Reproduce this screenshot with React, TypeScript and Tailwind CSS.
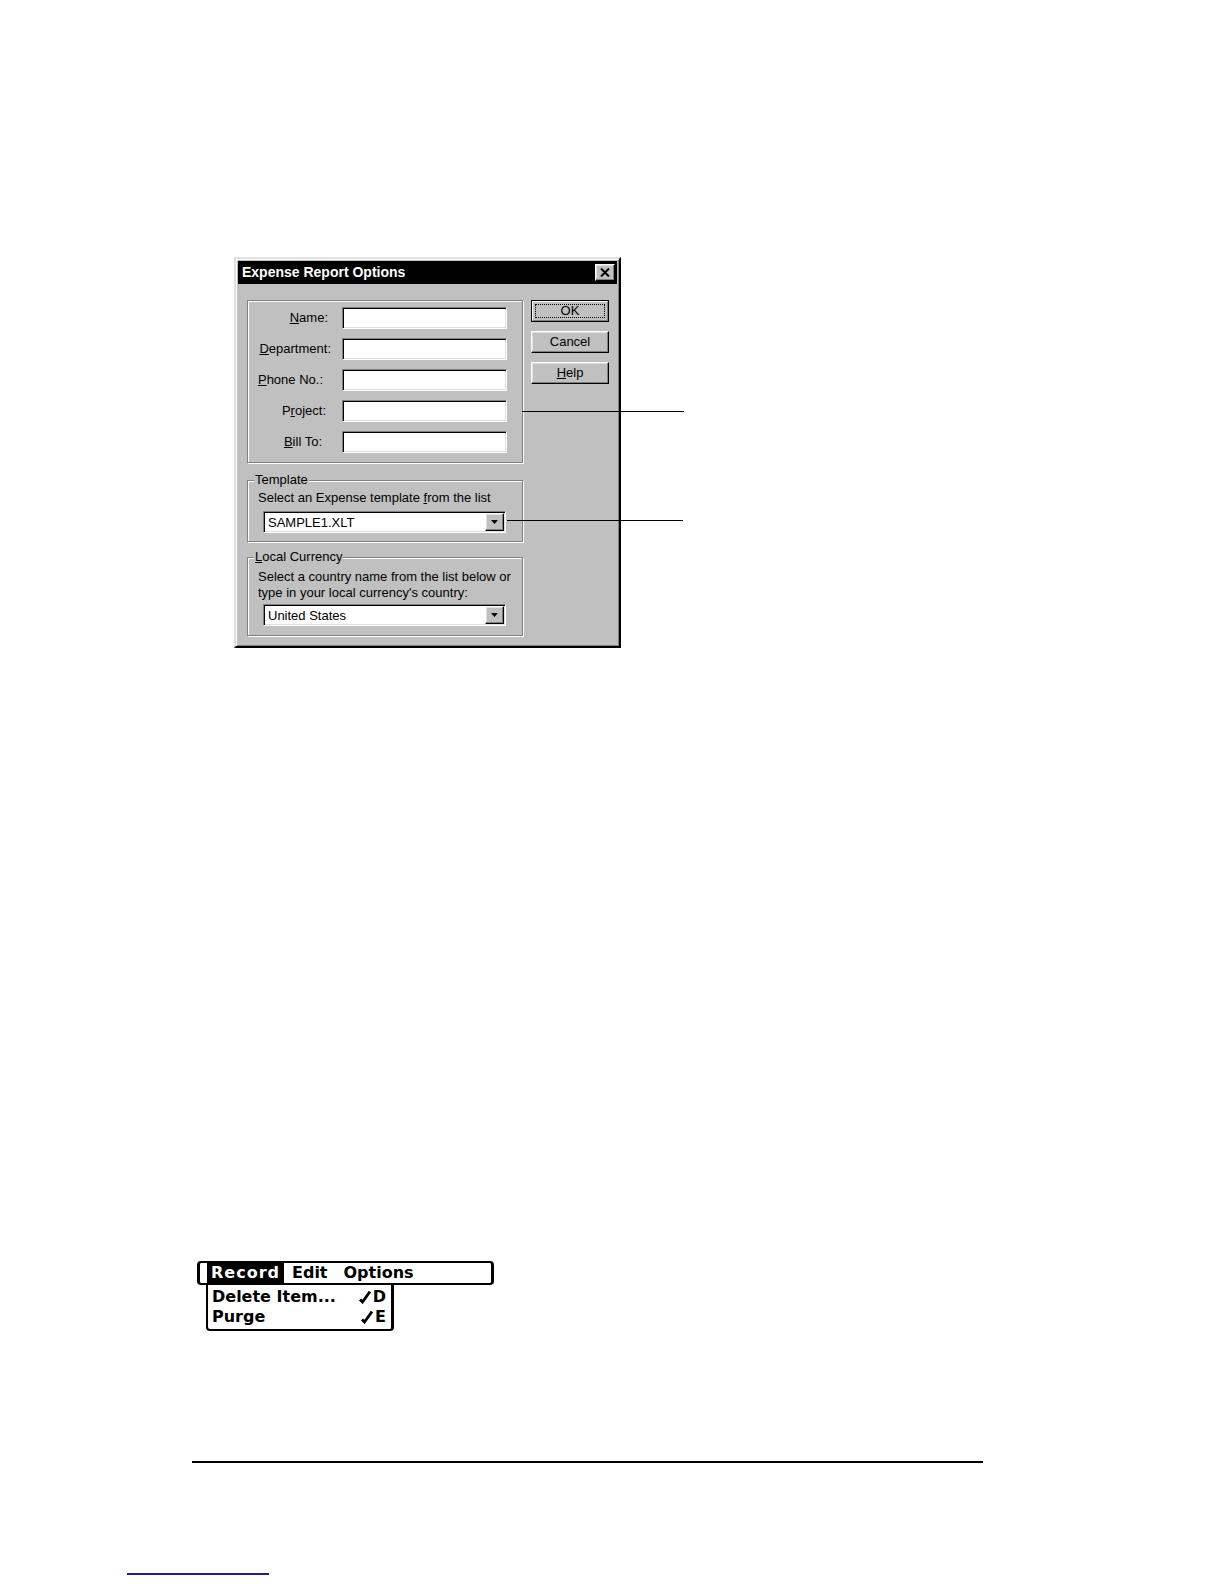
import React from 'react';

/**
 * Manual page: Win95 "Expense Report Options" dialog with callout lines,
 * a Palm OS menu, and the page footer rule.
 */

const raised =
  'border border-t-white border-l-white border-r-black border-b-black shadow-[inset_-1px_-1px_0_#808080,inset_1px_1px_0_#dfdfdf]';
const sunken =
  'border border-t-[#808080] border-l-[#808080] border-r-white border-b-white shadow-[inset_1px_1px_0_#000,inset_-1px_-1px_0_#dfdfdf]';
const etched = 'border border-[#808080] shadow-[inset_1px_1px_0_#fff,1px_1px_0_#fff]';

function CloseGlyph() {
  return (
    <svg viewBox="0 0 10 9" className="h-[9px] w-[10px]">
      <path d="M1 0.5 L9 8.5 M9 0.5 L1 8.5" stroke="black" strokeWidth="2" />
    </svg>
  );
}

function DownArrow() {
  return (
    <svg viewBox="0 0 7 4" className="h-[4px] w-[7px]">
      <polygon points="0,0 7,0 3.5,4" fill="black" />
    </svg>
  );
}

function TextField() {
  return <div className={`h-[22px] w-[165px] bg-white ${sunken}`} />;
}

function Combo({ value }: { value: string }) {
  return (
    <div className={`flex h-[22px] w-[243px] bg-white p-[1px] ${sunken}`}>
      <div className="flex flex-1 items-center pl-[3px] leading-none">{value}</div>
      <div className={`flex h-[18px] w-[19px] items-center justify-center bg-[#c0c0c0] ${raised}`}>
        <DownArrow />
      </div>
    </div>
  );
}

function Field({ label, pad }: { label: React.ReactNode; pad: string }) {
  return (
    <div className="flex h-[22px] items-center">
      <div className={`w-[94px] text-right ${pad}`}>{label}</div>
      <TextField />
    </div>
  );
}

function GroupBox({ legend, className, children }: { legend: React.ReactNode; className: string; children: React.ReactNode }) {
  return (
    <div className={`relative ${etched} ${className}`}>
      <span className="absolute left-[6px] top-[-9px] bg-[#c0c0c0] px-[1px] leading-[16px]">{legend}</span>
      {children}
    </div>
  );
}

function WinButton({ children }: { children: React.ReactNode }) {
  return (
    <div className={`flex h-[22px] w-[78px] items-center justify-center bg-[#c0c0c0] ${raised}`}>
      {children}
    </div>
  );
}

function ExpenseDialog() {
  return (
    <div
      className="flex h-[391px] w-[387px] flex-col border-2 border-t-[#dfdfdf] border-l-[#dfdfdf] border-r-black border-b-black bg-[#c0c0c0] p-[2px] text-[13px] text-black shadow-[inset_1px_1px_0_#fff,inset_-1px_-1px_0_#808080]"
      style={{ fontFamily: '"Liberation Sans", Arial, sans-serif' }}
    >
      {/* title bar */}
      <div className="flex h-[23px] items-center justify-between bg-black pl-[4px] pr-[2px]">
        <span className="text-[14px] font-bold text-white">Expense Report Options</span>
        <div className={`flex h-[17px] w-[20px] items-center justify-center bg-[#c0c0c0] ${raised}`}>
          <CloseGlyph />
        </div>
      </div>

      <div className="flex gap-[8px] pl-[9px] pt-[16px]">
        <div className="flex w-[276px] flex-col">
          <div className={`flex h-[163px] flex-col gap-[9px] pt-[6px] ${etched}`}>
            <Field pad="pr-[14px]" label={<><u>N</u>ame:</>} />
            <Field pad="pr-[11px]" label={<><u>D</u>epartment:</>} />
            <Field pad="pr-[19px]" label={<><u>P</u>hone No.:</>} />
            <Field pad="pr-[16px]" label={<>P<u>r</u>oject:</>} />
            <Field pad="pr-[20px]" label={<><u>B</u>ill To:</>} />
          </div>

          <GroupBox legend="Template" className="mt-[17px] h-[62px] pl-[10px] pt-[9px]">
            <div className="leading-[16px]">
              Select an Expense template <u>f</u>rom the list
            </div>
            <div className="ml-[5px] mt-[5px]">
              <Combo value="SAMPLE1.XLT" />
            </div>
          </GroupBox>

          <GroupBox legend={<><u>L</u>ocal Currency</>} className="mt-[15px] h-[79px] pl-[10px] pt-[11px]">
            <div className="leading-[16px]">
              Select a country name from the list below or
              <br />
              type in your local currency's country:
            </div>
            <div className="ml-[5px] mt-[3px]">
              <Combo value="United States" />
            </div>
          </GroupBox>
        </div>

        <div className="flex flex-col gap-[9px]">
          <div className="flex h-[22px] w-[78px] border border-black bg-[#c0c0c0]">
            <div className="flex flex-1 border border-t-white border-l-white border-r-[#808080] border-b-[#808080] p-[2px]">
              <div className="flex flex-1 items-center justify-center border border-dotted border-black">OK</div>
            </div>
          </div>
          <WinButton>Cancel</WinButton>
          <WinButton>
            <u>H</u>elp
          </WinButton>
        </div>
      </div>
    </div>
  );
}

function StrokeGlyph() {
  return (
    <svg viewBox="0 0 12 14" className="h-[14px] w-[12px]">
      <polyline points="1,9.5 3.5,12 11,1.5" fill="none" stroke="black" strokeWidth="2.8" />
    </svg>
  );
}

function MenuItem({ label, cmd }: { label: string; cmd: string }) {
  return (
    <div className="flex h-[20px] items-center justify-between pl-[4px] pr-[5px]">
      <span>{label}</span>
      <span className="flex items-center gap-[2px]">
        <StrokeGlyph />
        {cmd}
      </span>
    </div>
  );
}

function PalmMenu() {
  return (
    <div
      className="ml-[197px] mt-[613px] w-[297px] text-[16px] font-bold leading-[20px] text-black"
      style={{ fontFamily: '"DejaVu Sans", Verdana, sans-serif' }}
    >
      <div className="flex h-[24px] items-center rounded-[4px] border-y-2 border-x-[3px] border-black bg-white">
        <span className="ml-[7px] bg-black px-[4px] tracking-[1px] text-white">Record</span>
        <span className="ml-[8px]">Edit</span>
        <span className="ml-[16px]">Options</span>
      </div>
      <div className="ml-[9px] w-[188px] rounded-b-[4px] border-b-2 border-l-2 border-r-[3px] border-black bg-white pt-[2px] pb-[2px]">
        <MenuItem label="Delete Item..." cmd="D" />
        <MenuItem label="Purge" cmd="E" />
      </div>
    </div>
  );
}

export default function App() {
  return (
    <div className="relative h-[1584px] w-[1224px] overflow-hidden bg-white">
      <div className="pl-[234px] pt-[257px]">
        <div className="relative w-[387px]">
          <ExpenseDialog />
          {/* callout leader lines */}
          <div className="absolute left-[288px] top-[154px] h-px w-[162px] bg-black" />
          <div className="absolute left-[273px] top-[263px] h-px w-[176px] bg-black" />
        </div>
      </div>

      <PalmMenu />

      <div className="ml-[192px] mt-[130px] h-[2px] w-[791px] bg-black" />
      <div className="ml-[127px] mt-[110px] h-[2px] w-[142px] bg-[#1f1f8c]" />
    </div>
  );
}
